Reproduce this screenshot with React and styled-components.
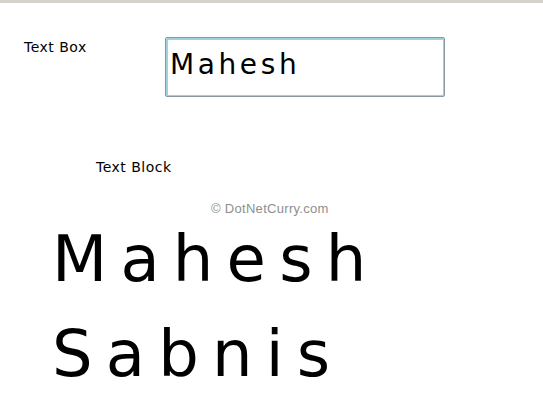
import React from "react";
import styled, { createGlobalStyle } from "styled-components";

const GlobalStyle = createGlobalStyle`
  html, body {
    margin: 0;
    padding: 0;
    background: #ffffff;
  }
  body {
    font-family: "DejaVu Sans", Verdana, sans-serif;
    color: #000;
  }
`;

const Page = styled.div`
  position: relative;
  width: 543px;
  height: 416px;
  overflow: hidden;
  background: #fff;
`;

const TopBar = styled.div`
  height: 3px;
  background: #d6d3cc;
`;

const FormRow = styled.div`
  display: grid;
  grid-template-columns: 141px 280px;
  align-items: start;
  margin-top: 34px;
  padding-left: 24px;
`;

const Label = styled.div`
  font-size: 14px;
  line-height: 15px;
  letter-spacing: 0.5px;
  margin-top: ${(p) => p.$top || 0}px;
  margin-left: ${(p) => p.$left || 0}px;
`;

const TextInput = styled.input`
  box-sizing: border-box;
  width: 280px;
  height: 60px;
  margin: 0;
  padding: 0 0 5px 4px;
  border: 1px solid #8a97a2;
  border-radius: 2px;
  box-shadow: inset 2px 2px 0 #9fd2df, inset -1px -1px 0 #9fd2df;
  background: #fff;
  font-family: "DejaVu Sans", Verdana, sans-serif;
  font-size: 28px;
  letter-spacing: 3.6px;
  color: #000;
  outline: none;
`;

const Watermark = styled.div`
  position: absolute;
  left: 211px;
  top: 201px;
  font-family: "Liberation Sans", Arial, sans-serif;
  font-size: 13px;
  line-height: 15px;
  letter-spacing: 0.3px;
  color: #8e8e8e;
`;

const BigText = styled.div`
  margin-top: 37px;
  padding-left: 52px;
  font-size: 64px;
  line-height: 95px;
  letter-spacing: 13.2px;
  color: #000;
`;

export default function App() {
  return (
    <>
      <GlobalStyle />
      <Page>
        <TopBar />
        <FormRow>
          <Label $top={3}>Text Box</Label>
          <TextInput type="text" value="Mahesh" readOnly />
        </FormRow>
        <Label $top={63} $left={96}>Text Block</Label>
        <BigText>
          Mahesh
          <br />
          Sabnis
        </BigText>
        <Watermark>© DotNetCurry.com</Watermark>
      </Page>
    </>
  );
}
